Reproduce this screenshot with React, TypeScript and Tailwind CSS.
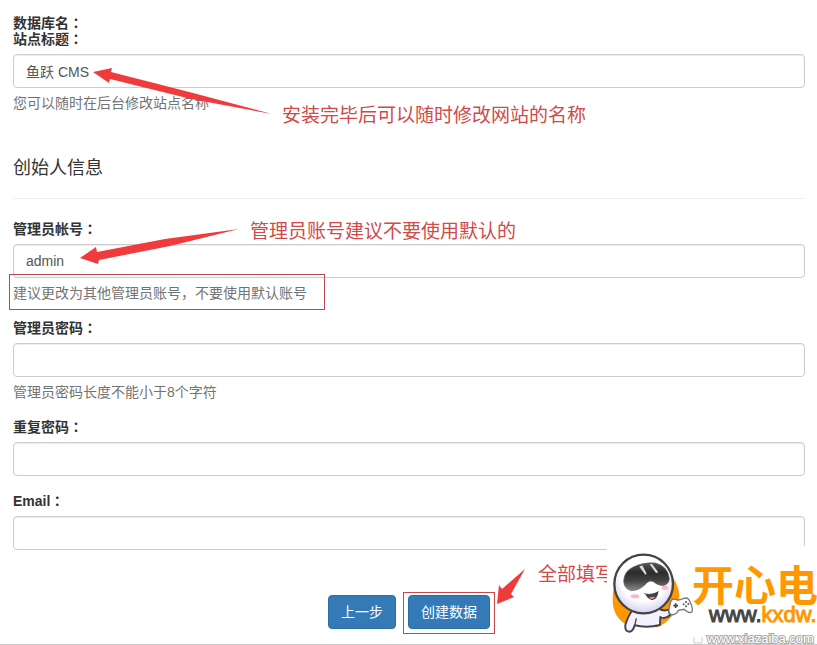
import { useId } from "react";

const inputClass =
  "block w-full h-[34px] px-3 border border-[#ccc] rounded bg-white text-sm text-[#555] shadow-[inset_0_1px_1px_rgba(0,0,0,0.075)]";

// Full-width colon, centred in its box
function Colon() {
  return (
    <span className="leading-none font-['Noto_Sans_CJK_TC',sans-serif]">
      ：
    </span>
  );
}

function Field(props: {
  label: string;
  type?: string;
  value?: string;
  help?: string;
}) {
  const id = useId();
  return (
    <div className="mb-[15px]">
      <label htmlFor={id} className="block mb-[5px] leading-5 font-bold">
        {props.label}
        <Colon />
      </label>
      <input
        id={id}
        type={props.type ?? "text"}
        defaultValue={props.value}
        className={inputClass}
      />
      {props.help && (
        <p className="mt-[5px] leading-5 text-[#737373]">{props.help}</p>
      )}
    </div>
  );
}

function Note(props: { className: string; children: string }) {
  return (
    <p
      className={`absolute whitespace-nowrap text-[19px] leading-6 text-[#d04a4a] ${props.className}`}
    >
      {props.children}
    </p>
  );
}

function Arrow(props: {
  className: string;
  width: number;
  height: number;
  points: string;
}) {
  return (
    <svg
      className={`absolute pointer-events-none ${props.className}`}
      width={props.width}
      height={props.height}
      aria-hidden="true"
    >
      <polygon points={props.points} fill="#ef3b3b" />
    </svg>
  );
}

function Mascot() {
  return (
    <svg width="90" height="95" viewBox="21 3 270 285" aria-hidden="true">
      <defs>
        <radialGradient id="head" cx="0.5" cy="0.4" r="0.6">
          <stop offset="0.65" stopColor="#fff" />
          <stop offset="1" stopColor="#d3d0ef" />
        </radialGradient>
        <linearGradient id="visor" x1="0" y1="0" x2="0" y2="1">
          <stop offset="0" stopColor="#555" />
          <stop offset="0.35" stopColor="#2c2c2c" />
          <stop offset="0.65" stopColor="#444" />
          <stop offset="1" stopColor="#8a8a8a" />
        </linearGradient>
      </defs>
      <path
        d="M38 165 A100 100 0 0 1 238 150 Q238 190 214 215 Q195 238 170 247 L80 240 Q38 215 38 165Z"
        fill="#ff9700"
      />
      <path
        d="M100 192 Q84 212 76 240 Q74 260 88 260 Q99 260 104 241 Q140 250 180 240 L181 216 Q195 224 210 211 L206 194 Q190 200 176 190Z"
        fill="#f4f2ff"
        stroke="#444"
        strokeWidth="6"
        strokeLinejoin="round"
      />
      <path d="M104 242 L109 220" stroke="#444" strokeWidth="4" />
      <ellipse
        cx="131"
        cy="117"
        rx="88"
        ry="88"
        fill="url(#head)"
        stroke="#444"
        strokeWidth="7"
      />
      <path
        d="M71 108 Q72 80 98 67 Q130 51 166 54 Q204 64 208 101 Q207 118 190 122 Q174 122 160 110 Q150 105 141 113 Q122 136 94 137 Q72 132 71 108Z"
        fill="url(#visor)"
        stroke="#666"
        strokeWidth="2"
      />
      <path
        d="M118 65 L127 61 L140 86 L136 89Z M149 58 L156 57 L175 82 L168 84Z"
        fill="#ddd"
      />
      <ellipse cx="105" cy="154" rx="13" ry="6" fill="#ffb5ca" />
      <ellipse cx="195" cy="128" rx="10" ry="6" fill="#ffb5ca" />
      <path
        d="M130 143 Q153 153 176 138 Q172 164 157 165 Q144 164 136 148Z"
        fill="#444"
      />
      <path d="M147 159 Q156 153 166 157 Q158 165 147 159Z" fill="#ef8b94" />
      <path
        d="M216 164 Q225 160 233 166 L250 161 Q264 155 269 168 Q280 190 276 200 Q268 208 252 193 L235 196 Q227 213 212 208 Q203 202 209 181 Q211 168 216 164Z"
        fill="#fff"
        stroke="#777"
        strokeWidth="4"
      />
      <path d="M220 182 H234 M227 175 V189" stroke="#444" strokeWidth="5" />
      <g fill="#555">
        <circle cx="258" cy="171" r="3" />
        <circle cx="258" cy="184" r="3" />
        <circle cx="251" cy="178" r="3" />
        <circle cx="265" cy="177" r="3" />
      </g>
    </svg>
  );
}

function SiteBadge() {
  return (
    <div className="absolute right-0 bottom-0 w-[210px] h-[98px] flex overflow-hidden bg-white">
      <div className="shrink-0 w-[86px]">
        <Mascot />
      </div>
      <svg
        width="124"
        height="98"
        className="shrink-0"
        role="img"
        aria-label="开心电 www.kxdw."
      >
        <text
          x="-1"
          y="55"
          fontSize="42"
          fontWeight="700"
          fontFamily="'Noto Sans CJK SC', sans-serif"
          fill="#ff9700"
        >
          开心电
        </text>
        <text
          x="16"
          y="76"
          fontFamily="'Liberation Sans', sans-serif"
          fontSize="22"
          fill="#444"
          stroke="#444"
          strokeWidth="1"
        >
          www.
          <tspan fill="#ff9700" stroke="#ff9700">
            kxdw.
          </tspan>
        </text>
        <path d="M1 91 V97 H9 V91" fill="none" stroke="#ccc" />
        <text
          x="14"
          y="97"
          fontFamily="'Liberation Sans', sans-serif"
          fontSize="13"
          fill="#fff"
          stroke="#aaa"
          strokeWidth="2"
          paintOrder="stroke"
        >
          www.xiazaiba.com
        </text>
      </svg>
    </div>
  );
}

export default function App() {
  return (
    <main className="relative overflow-hidden border-b border-[#ccc] bg-white pt-[15px] pb-[15px] pl-[13px] pr-3 text-sm text-[#333] font-['Liberation_Sans','Noto_Sans_CJK_SC',sans-serif]">
      <form onSubmit={(e) => e.preventDefault()}>
        <section className="relative">
          <p className="leading-4 font-bold">
            数据库名
            <Colon />
          </p>
          <label
            htmlFor="site-title"
            className="block mb-[7px] leading-4 font-bold"
          >
            站点标题
            <Colon />
          </label>
          <input
            id="site-title"
            type="text"
            defaultValue="鱼跃 CMS"
            className={inputClass}
          />
          <p className="mt-[5px] leading-5 text-[#737373]">
            您可以随时在后台修改站点名称
          </p>
          <Arrow
            className="left-20 top-[52px]"
            width={180}
            height={50}
            points="0,5 19,1 18,5 100,26 179,47 98,32 17,12 16,16"
          />
          <Note className="left-[269px] top-[89px]">
            安装完毕后可以随时修改网站的名称
          </Note>
        </section>

        <h4 className="mt-[45px] pb-5 mb-5 border-b border-[#eee] text-lg leading-5">
          创始人信息
        </h4>

        <div className="relative">
          <Field
            label="管理员帐号"
            value="admin"
            help="建议更改为其他管理员账号，不要使用默认账号"
          />
          <div className="absolute -left-1 top-[55px] w-[316px] h-9 border border-[#b9494c] pointer-events-none" />
          <Arrow
            className="left-[67px] top-2"
            width={160}
            height={40}
            points="0,31 16,20 17,25 85,12 159,2 90,19 19,33 18,37"
          />
          <Note className="left-[237px] top-px">
            管理员账号建议不要使用默认的
          </Note>
        </div>
        <Field
          label="管理员密码"
          type="password"
          help="管理员密码长度不能小于8个字符"
        />
        <Field label="重复密码" type="password" />
        <Field label="Email" />

        <div className="mt-[45px] flex justify-center gap-3">
          <button
            type="button"
            className="h-[34px] px-3 border border-[#2e6da4] rounded bg-[#337ab7] text-white"
          >
            上一步
          </button>
          <div className="relative">
            <button
              type="submit"
              className="block h-[34px] px-3 border border-[#2e6da4] rounded bg-[#337ab7] text-white"
            >
              创建数据
            </button>
            <div className="absolute -inset-x-[5px] -top-[3px] -bottom-[5px] border border-[#c9474a] pointer-events-none" />
            <Arrow
              className="left-[89px] -top-[27px]"
              width={29}
              height={38}
              points="0,36 2,17 5,21 28,1 14,26 17,29"
            />
            <Note className="left-[130px] -top-8">全部填写</Note>
          </div>
        </div>
      </form>
      <SiteBadge />
    </main>
  );
}
